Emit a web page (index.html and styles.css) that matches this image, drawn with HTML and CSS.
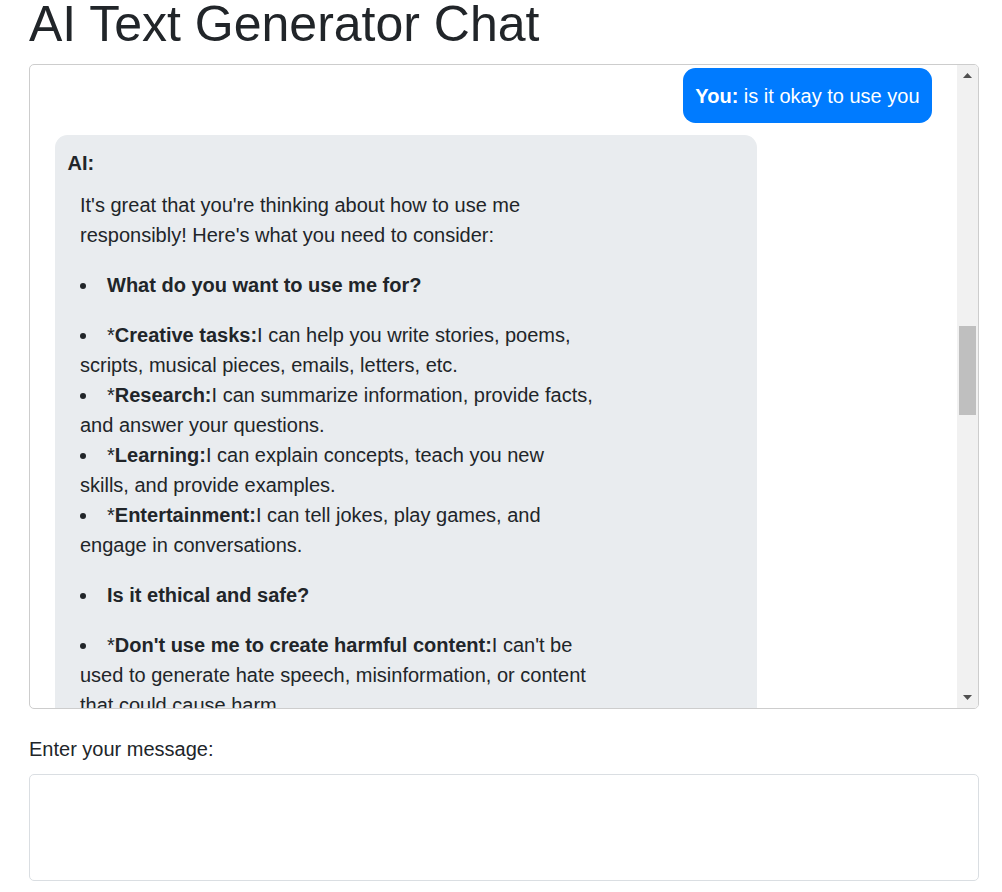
FILE: index.html
```html
<!DOCTYPE html>
<html lang="en">
<head>
<meta charset="utf-8">
<title>AI Text Generator Chat</title>
<link rel="stylesheet" href="styles.css">
</head>
<body>
<main class="page">
  <h1 class="title">AI Text Generator Chat</h1>
  <section class="chat-box">
    <div class="messages">
      <div class="msg msg-user"><strong>You:</strong> is it okay to use you</div>
      <div class="msg msg-ai">
        <strong>AI:</strong>
        <div class="ai-content">
          <div class="ai-text">
            <p>It's great that you're thinking about how to use me responsibly! Here's what you need to consider:</p>
            <ul><li><strong>What do you want to use me for?</strong></li></ul>
            <ul>
              <li>*<strong>Creative tasks:</strong>I can help you write stories, poems, scripts, musical pieces, emails, letters, etc.</li>
              <li>*<strong>Research:</strong>I can summarize information, provide facts, and answer your questions.</li>
              <li>*<strong>Learning:</strong>I can explain concepts, teach you new skills, and provide examples.</li>
              <li>*<strong>Entertainment:</strong>I can tell jokes, play games, and engage in conversations.</li>
            </ul>
            <ul><li><strong>Is it ethical and safe?</strong></li></ul>
            <ul>
              <li>*<strong>Don't use me to create harmful content:</strong>I can't be used to generate hate speech, misinformation, or content that could cause harm.</li>
              <li>*<strong>Be aware of bias:</strong>My responses are based on the data I was trained on, which may contain biases.</li>
            </ul>
          </div>
        </div>
      </div>
    </div>
    <div class="scrollbar" aria-hidden="true">
      <div class="sb-btn"><svg width="9" height="5" viewBox="0 0 9 5"><polygon points="0,5 9,5 4.5,0" fill="#505050"/></svg></div>
      <div class="sb-track"><div class="sb-thumb"></div></div>
      <div class="sb-btn"><svg width="9" height="5" viewBox="0 0 9 5"><polygon points="0,0 9,0 4.5,5" fill="#505050"/></svg></div>
    </div>
  </section>
  <div class="form-group">
    <label class="label" for="msg">Enter your message:</label>
    <textarea id="msg" class="input" rows="3"></textarea>
  </div>
</main>
</body>
</html>
```
FILE: styles.css
```css
* { box-sizing: border-box; }
html, body { margin: 0; padding: 0; background: #fff; }
body {
  font-family: "Liberation Sans", Arial, sans-serif;
  font-size: 20px;
  line-height: 30px;
  color: #212529;
  overflow: hidden;
}
.page {
  width: 950px;
  margin-left: 29px;
}
.title {
  font-size: 50px;
  line-height: 60px;
  font-weight: 500;
  margin: -6px 0 10px 0;
}
.chat-box {
  display: flex;
  height: 645px;
  border: 1px solid #cdcdcd;
  border-radius: 5px;
  overflow: hidden;
}
.messages {
  flex: 1;
  overflow: hidden;
  padding: 3px 25px 0 25px;
  display: flex;
  flex-direction: column;
  align-items: flex-start;
}
.msg {
  max-width: 80%;
  padding: 12.5px;
  border-radius: 12.5px;
  margin-bottom: 12px;
  flex-shrink: 0;
}
.msg-user {
  align-self: flex-end;
  background: #007bff;
  color: #fff;
}
.msg-ai {
  width: 80%;
  background: #e9ecef;
}
.ai-content {
  padding: 12.5px;
}
.ai-text {
  width: 514px;
}
.ai-text p { margin: 0 0 20px 0; }
.ai-text ul {
  margin: 0 0 20px 0;
  padding: 0;
  list-style: disc inside;
}
.scrollbar {
  width: 21px;
  flex-shrink: 0;
  background: #f1f1f1;
  display: flex;
  flex-direction: column;
}
.sb-btn {
  height: 21px;
  display: flex;
  align-items: center;
  justify-content: center;
}
.sb-track {
  flex: 1;
  padding: 0 2px;
}
.sb-thumb {
  margin-top: 240px;
  height: 89px;
  background: #bfbfbf;
}
.form-group { margin-top: 25px; }
.label {
  display: block;
  margin-bottom: 10px;
}
.input {
  display: block;
  width: 100%;
  height: 107px;
  border: 1px solid #dadee2;
  border-radius: 5px;
  padding: 7.5px 15px;
  font: inherit;
  resize: none;
  background: #fff;
}
```
